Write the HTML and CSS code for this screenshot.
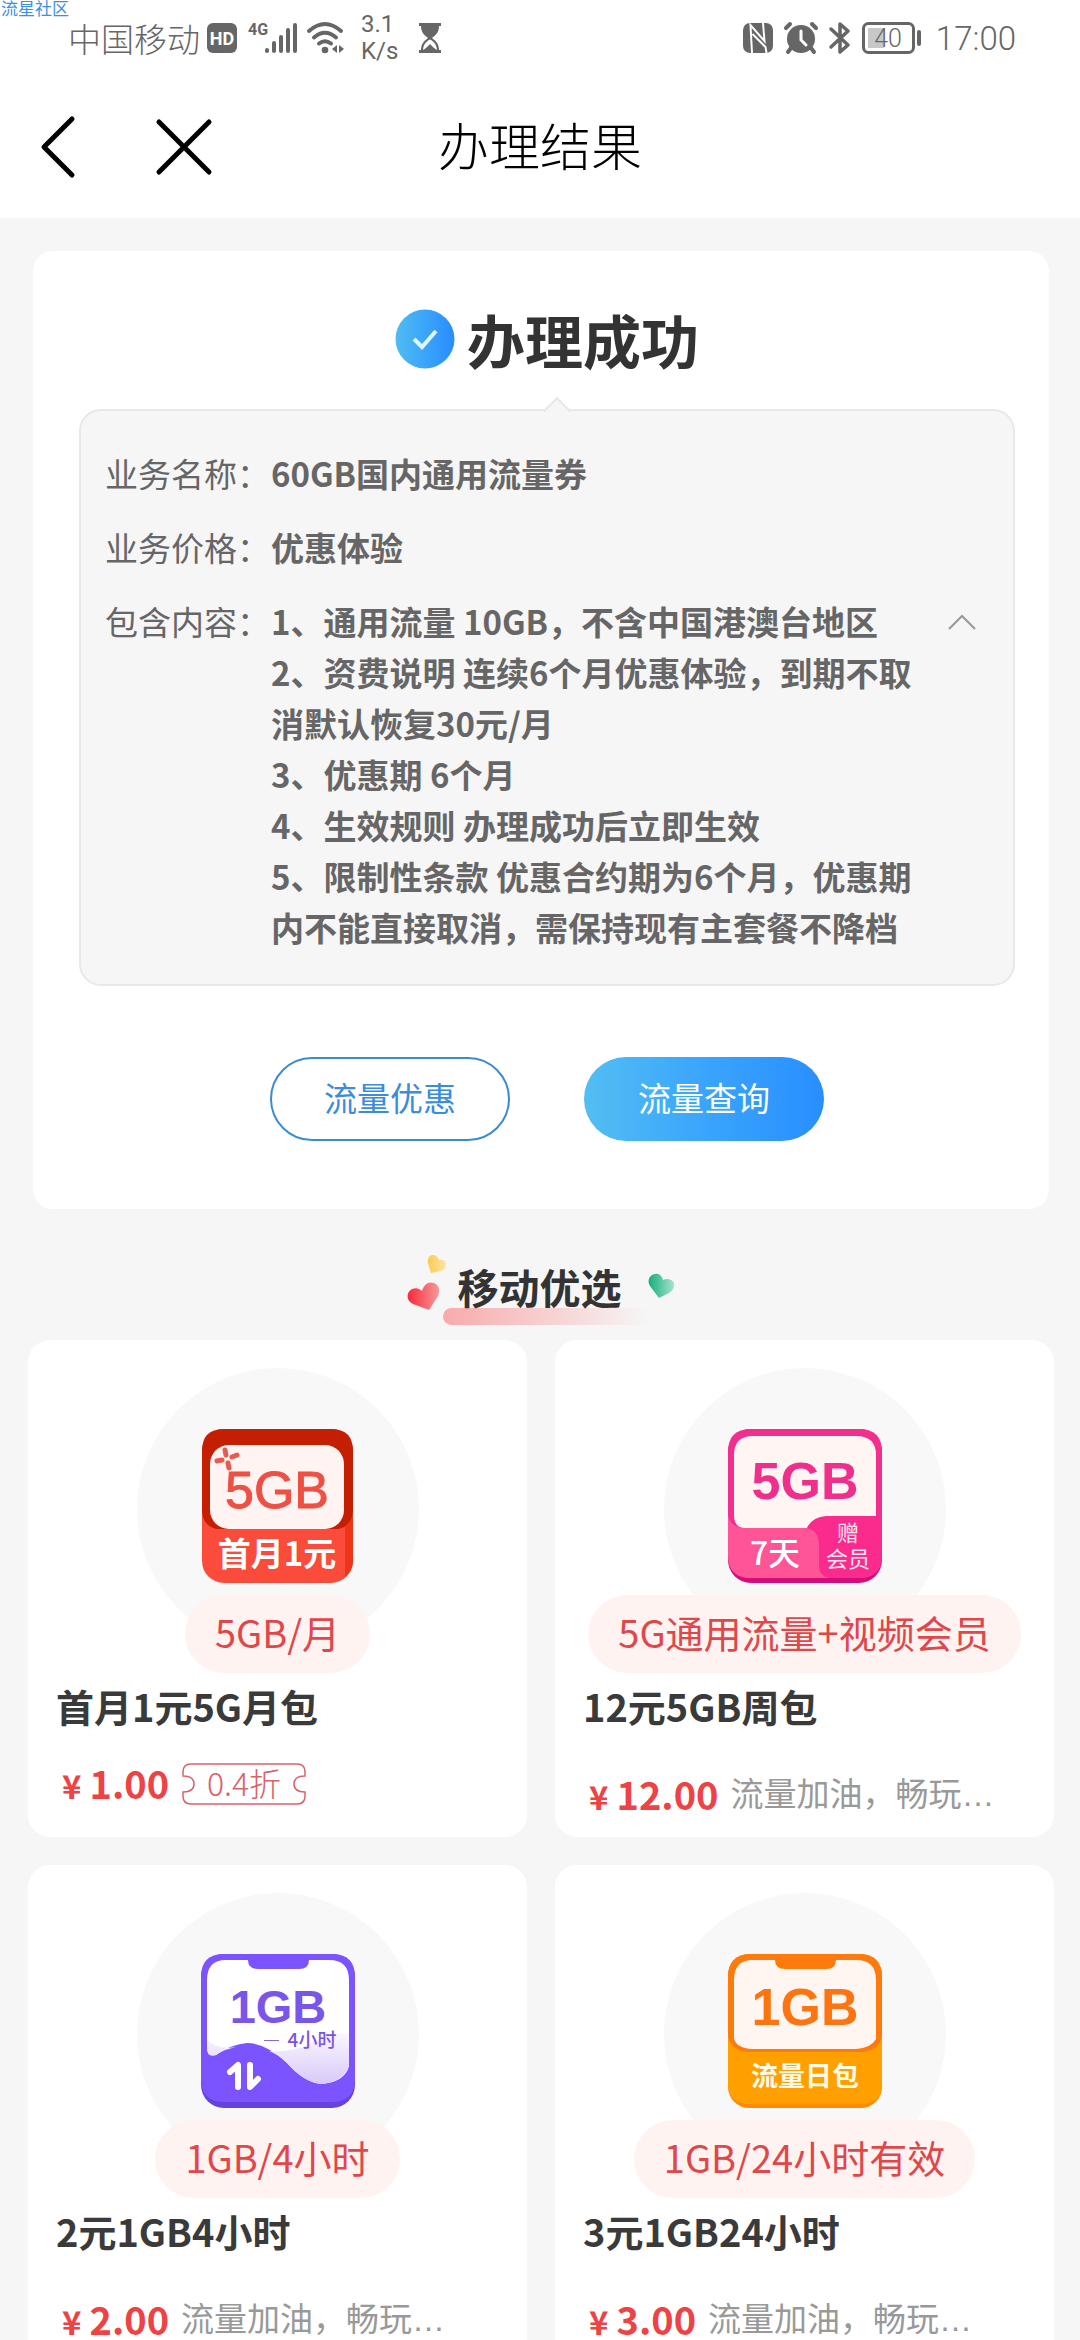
FILE: index.html
```html
<!DOCTYPE html>
<html lang="zh-CN">
<head>
<meta charset="utf-8">
<meta name="viewport" content="width=device-width, initial-scale=1">
<title>办理结果</title>
<link rel="stylesheet" href="styles.css">
</head>
<body>
<div class="screen">
  <span class="watermark">流星社区</span>
  <div class="status">
    <span class="carrier">中国移动</span>
    <svg class="hd" width="30" height="30" viewBox="0 0 30 30"><rect width="30" height="30" rx="6" fill="#666"/><text x="15" y="22" text-anchor="middle" class="hd-text">HD</text></svg>
    <svg class="signal" width="50" height="32" viewBox="0 0 50 32"><text x="0" y="13" class="net-text">4G</text><g stroke="#666" stroke-width="4" stroke-linecap="round"><path d="M19 28v1M26 21v8M33 15v14M40 8v21M47 3v26"/></g></svg>
    <svg class="wifi" width="38" height="32" viewBox="0 0 38 32" fill="none" stroke="#666" stroke-width="4" stroke-linecap="round"><path d="M2 9Q18 -5 34 9M7 15.500Q18 6 29 15.500M12 21.500Q18 17 24 21.500"/><circle cx="18" cy="28" r="3.300" fill="#666" stroke="none"/><path d="M30 23v8l-5-4zM32 31v-8l5 4z" fill="#666" stroke="none"/></svg>
    <span class="speed">3.1<br>K/s</span>
    <svg width="24" height="32" viewBox="0 0 24 32"><path d="M1 1h22v3h-2c0 6-3 9-7 12 4 3 7 6 7 12h2v3H1v-3h2c0-6 3-9 7-12-4-3-7-6-7-12H1z" fill="#666"/><path d="M12 17.500c-4 2-6.500 5-7 10.500 2-1 5-4 7-6 2 2 5 5 7 6-.5-5.500-3-8.500-7-10.500z" fill="#fff"/></svg>
    <span class="grow"></span>
    <svg width="30" height="32" viewBox="0 0 30 32"><rect y="1" width="30" height="30" rx="7" fill="#666"/><path d="M9 31L7.500 3l14 16L20 1M9.500 12l13 13 1 6" fill="none" stroke="#fff" stroke-width="2"/></svg>
    <svg width="34" height="32" viewBox="0 0 34 32"><circle cx="17" cy="17" r="14" fill="#666"/><path d="M2 6l4-4M32 6l-4-4M7 26l-3 4M27 26l3 4" stroke="#666" stroke-width="4" stroke-linecap="round"/><path d="M17 9v9l5 5" fill="none" stroke="#fff" stroke-width="3" stroke-linecap="round"/></svg>
    <svg width="22" height="34" viewBox="0 0 22 34"><path d="M2 8l17 16-8 7V3l8 7L2 26" fill="none" stroke="#666" stroke-width="3.500" stroke-linejoin="round" stroke-linecap="round"/></svg>
    <svg class="battery" width="60" height="34" viewBox="0 0 60 34"><rect x="1.500" y="2.500" width="50" height="29" rx="5" fill="none" stroke="#666" stroke-width="3"/><rect x="6" y="7" width="16" height="20" fill="#c8c8c8"/><text x="26" y="26" text-anchor="middle" class="battery-text">40</text><rect x="55" y="9" width="4" height="16" rx="2" fill="#666"/></svg>
    <span class="clock">17:00</span>
  </div>

  <header class="nav">
    <div class="nav-actions">
      <button class="icon-button" aria-label="返回"><svg width="36" height="62" viewBox="0 0 36 62"><path d="M32 3L4 31l28 28" fill="none" stroke="#000" stroke-width="5" stroke-linecap="round" stroke-linejoin="round"/></svg></button>
      <button class="icon-button" aria-label="关闭"><svg width="56" height="56" viewBox="0 0 56 56"><path d="M3 3l50 50M53 3L3 53" stroke="#000" stroke-width="5" stroke-linecap="round"/></svg></button>
    </div>
    <h1 class="nav-title">办理结果</h1>
  </header>

  <main class="content">
    <section class="result">
      <h2 class="result-title">
        <svg width="60" height="60" viewBox="0 0 60 60"><defs><linearGradient id="tick" x1="0" x2="1"><stop offset="0" stop-color="#4fbcf3"/><stop offset="1" stop-color="#278dff"/></linearGradient></defs><circle cx="30" cy="30" r="29.500" fill="url(#tick)"/><path d="M19 30l8 8 14-16" fill="none" stroke="#dff5ff" stroke-width="4"/></svg>
        办理成功
      </h2>
      <dl class="detail">
        <div class="row"><dt>业务名称：</dt><dd>60GB国内通用流量券</dd></div>
        <div class="row"><dt>业务价格：</dt><dd>优惠体验</dd></div>
        <div class="row"><dt>包含内容：</dt>
          <dd>
            <p>1、通用流量 10GB，不含中国港澳台地区</p>
            <p>2、资费说明 连续6个月优惠体验，到期不取消默认恢复30元/月</p>
            <p>3、优惠期 6个月</p>
            <p>4、生效规则 办理成功后立即生效</p>
            <p>5、限制性条款 优惠合约期为6个月，优惠期内不能直接取消，需保持现有主套餐不降档</p>
          </dd>
          <dd class="toggle"><button class="icon-button" aria-label="收起"><svg width="28" height="16" viewBox="0 0 28 16"><path d="M1 15L14 2l13 13" fill="none" stroke="#999" stroke-width="2"/></svg></button></dd>
        </div>
      </dl>
      <div class="actions">
        <button class="pill outline">流量优惠</button>
        <button class="pill filled">流量查询</button>
      </div>
    </section>

    <div class="picks-head">
      <svg width="42" height="64" viewBox="0 0 42 64"><defs><linearGradient id="red" x1="0" x2="1"><stop offset="0" stop-color="#f9283c"/><stop offset="1" stop-color="#f79a9a"/></linearGradient><linearGradient id="gold" x1="0" x2="1"><stop offset="0" stop-color="#fbcb50"/><stop offset="1" stop-color="#fbe5a8"/></linearGradient></defs><path d="M22 56L6 50C-1 47-1 38 5 35c5-2 8 0 10 2 2-7 7-10 12-8 6 2 6 9 4 13z" fill="url(#red)"/><path d="M24 19L21 9c-1-4 1-8 5-8 3 0 5 2 6 5 3-1 7 0 7 4s-2 6-5 7z" fill="url(#gold)"/></svg>
      <h2 class="picks-title">移动优选</h2>
      <svg width="28" height="26" viewBox="0 0 28 26"><defs><linearGradient id="green" x1="0" x2="1"><stop offset="0" stop-color="#16ae7c"/><stop offset="1" stop-color="#a8e3cf"/></linearGradient></defs><path d="M11 25L2 13C-1 8 1 2 7 1c4-1 7 2 8 6 4-2 9-1 11 3 1 5-2 8-5 10z" fill="url(#green)"/></svg>
    </div>

    <section class="picks">
      <article class="card">
        <div class="art">
          <svg width="154" height="154" viewBox="0 0 154 154"><rect x="1" width="151" height="154" rx="22" fill="#fb4c3b"/><path d="M1 22Q1 0 23 0h107q22 0 22 22v60q0 14-14 18H15Q1 96 1 82z" fill="#c41f02"/><path d="M1 84q2 16 22 20h107q20-4 22-20v40H1z" fill="#fb4c3b"/><path d="M144 98q7-6 8-14v48q0 9-8 16z" fill="#ee3518"/><rect x="9" y="16" width="134" height="84" rx="19" fill="#fff4f2"/><g stroke="#ea5a50" stroke-width="5" stroke-linecap="round"><path d="M24 21l1 5M16 32l5-1M31 28l5-2M27 34l1 5"/></g><text x="76" y="79" text-anchor="middle" class="art-big art-red">5GB</text><text x="76" y="137" text-anchor="middle" class="art-label">首月1元</text></svg>
        </div>
        <span class="tag">5GB/月</span>
        <h3 class="name">首月1元5G月包</h3>
        <div class="price-row compact"><span class="price"><span class="yen">¥</span>1.00</span>
          <span class="coupon"><svg width="126" height="42" viewBox="0 0 126 42"><path d="M10 1h106q8 0 8 8v4q-11 0-11 8t11 8v4q0 8-8 8H10q-8 0-8-8v-4q11 0 11-8T2 13V9q0-8 8-8z" fill="none" stroke="#d9626a" stroke-width="1.500"/><text x="63" y="33" text-anchor="middle" class="coupon-text">0.4折</text></svg></span>
        </div>
      </article>

      <article class="card">
        <div class="art">
          <svg width="154" height="154" viewBox="0 0 154 154"><rect width="154" height="154" rx="23" fill="#d50d7b"/><path d="M0 23Q0 0 23 0h108q23 0 23 23v103q0 23-23 23H23Q0 149 0 126z" fill="#f22f8d"/><path d="M6 26Q6 7 25 7h103q20 0 20 19v61H98q-14 1-19 12H17Q6 99 6 86z" fill="#fff5f3"/><path d="M0 86q3 13 16 13h60q15 0 15 18v20q0 10 10 12H23Q0 149 0 126z" fill="#ff5596"/><path d="M98 88h56v38q0 23-23 23h-26q-13-2-13-14v-18q0-15-13-18 5-10 19-11z" fill="#fb2b8d"/><text x="77" y="70" text-anchor="middle" class="art-big art-bold art-pink">5GB</text><text x="47" y="136" text-anchor="middle" class="art-seven">7天</text><text x="120" y="112" text-anchor="middle" class="art-small">赠</text><text x="120" y="138" text-anchor="middle" class="art-small">会员</text></svg>
        </div>
        <span class="tag">5G通用流量+视频会员</span>
        <h3 class="name">12元5GB周包</h3>
        <div class="price-row"><span class="price"><span class="yen">¥</span>12.00</span><span class="desc">流量加油，畅玩…</span></div>
      </article>

      <article class="card">
        <div class="art">
          <svg width="154" height="154" viewBox="0 0 154 154"><defs><linearGradient id="lilac" x1="0" x2="0" y1="0" y2="1"><stop offset="0" stop-color="#fbf7ff"/><stop offset="1" stop-color="#d9c9f8"/></linearGradient></defs><rect width="154" height="154" rx="23" fill="#6541dd"/><path d="M0 23Q0 0 23 0h108q23 0 23 23v102q0 23-23 23H23Q0 148 0 125z" fill="#7b53ff"/><path d="M6 26Q6 6 25 6h22q0 9 10 9h41q10 0 10-9h20q20 0 20 20v86q-4 16-28 18-17-2-34-21-21-20-40-20-15 1-31 12-9 2-9-7z" fill="#fff"/><path d="M68 97q23 2 42-8 20-11 38-10v33q-6 16-28 18-18-2-34-21-9-9-18-12zM6 86q12 10 29 7-14 3-20 8-9 3-9-7z" fill="url(#lilac)"/><text x="77" y="69" text-anchor="middle" class="art-mid art-purple">1GB</text><path d="M63 86.500h15" stroke="#8a68cf"/><text x="111" y="93" text-anchor="middle" class="art-hours art-purple">4小时</text><path d="M29 118l8-7v22M49 111v22l8-8" fill="none" stroke="#fff" stroke-width="6" stroke-linecap="round" stroke-linejoin="round"/></svg>
        </div>
        <span class="tag">1GB/4小时</span>
        <h3 class="name">2元1GB4小时</h3>
        <div class="price-row"><span class="price"><span class="yen">¥</span>2.00</span><span class="desc">流量加油，畅玩…</span></div>
      </article>

      <article class="card">
        <div class="art">
          <svg width="154" height="154" viewBox="0 0 154 154"><rect width="154" height="154" rx="21" fill="#ff8a00"/><path d="M0 80h154v50q0 20-22 20H22Q0 150 0 130z" fill="#ffa000"/><path d="M0 23Q0 0 23 0h108q23 0 23 23v57q-1 16-20 18H20Q1 96 0 80z" fill="#fd7a0c"/><path d="M6 26Q6 6 25 6h22q0 9 10 9h41q10 0 10-9h20q20 0 20 20v59q-5 9-20 10H24Q9 94 6 85z" fill="#fff6f2"/><text x="77" y="71" text-anchor="middle" class="art-big art-bold art-orange">1GB</text><text x="77" y="132" text-anchor="middle" class="art-day">流量日包</text></svg>
        </div>
        <span class="tag">1GB/24小时有效</span>
        <h3 class="name">3元1GB24小时</h3>
        <div class="price-row"><span class="price"><span class="yen">¥</span>3.00</span><span class="desc">流量加油，畅玩…</span></div>
      </article>
    </section>
  </main>
</div>
</body>
</html>
```
FILE: styles.css
```css
* { box-sizing: border-box; margin: 0; padding: 0; }
body { background: #f6f6f6; color: #333; font-family: "Noto Sans CJK SC", sans-serif; }
svg { display: block; flex: none; overflow: visible; }
button { font: inherit; cursor: pointer; }

.screen { position: relative; display: flex; flex-direction: column; height: 100vh; overflow: hidden; }
.watermark { position: absolute; top: 0; left: 1px; color: #3a90e4; font-size: 17px; line-height: 16px; }

/* Status bar */
.status { display: flex; flex: none; align-items: center; height: 76px; padding: 0 64px 0 68px; gap: 11px; background: #fff; color: #666; }
.carrier { font-size: 33px; font-weight: 300; line-height: 48px; }
.hd { margin-left: -4px; }
.signal { margin-right: -2px; }
.wifi { margin-right: 5px; }
.speed { margin-right: 9px; font-family: Roboto, sans-serif; font-size: 24px; line-height: 27px; }
.grow { flex: 1; }
.clock { margin-left: 3px; font-family: Roboto, sans-serif; font-size: 33px; font-weight: 300; }
.hd-text { fill: #fff; font: bold 18px Roboto, sans-serif; }
.net-text { fill: #666; font: bold 16px Roboto, sans-serif; }
.battery-text { fill: #666; font: 300 25px Roboto, sans-serif; }

/* Navigation bar */
.nav { display: grid; flex: none; grid-template-columns: 1fr auto 1fr; align-items: center; height: 142px; padding: 0 40px; background: #fff; color: #000; }
.nav-actions { display: flex; align-items: center; gap: 80px; }
.icon-button { border: 0; background: none; }
.nav-title { padding-bottom: 6px; font-size: 51px; font-weight: 300; line-height: 74px; }

.content { flex: 1; min-height: 0; overflow-y: auto; scrollbar-width: none; padding: 33px 26px 28px 28px; }

/* Result card */
.result { margin: 0 5px; padding: 47px 34px 68px 46px; border-radius: 20px; background: #fff; }
.result-title { display: flex; justify-content: center; align-items: center; gap: 12px; margin-bottom: 29px; font-size: 58px; font-weight: 700; line-height: 82px; }
.detail { position: relative; display: flex; flex-direction: column; gap: 23px; padding: 37px 37px 31px 24px; border: 2px solid #e8e8e8; border-radius: 22px; background: #f6f6f6; color: #666; font-size: 33px; line-height: 51px; }
.detail::before { content: ""; position: absolute; top: -10px; left: 50%; width: 18px; height: 18px; border: 2px solid #e8e8e8; border-right: 0; border-bottom: 0; background: #f6f6f6; transform: rotate(45deg); }
.row { display: flex; }
.row dt { flex: none; width: 166px; }
.row dd { flex: 1; font-weight: 700; }
.row .toggle { flex: none; margin-left: 26px; }
.toggle .icon-button { display: flex; align-items: center; height: 51px; }
.actions { display: flex; justify-content: center; gap: 74px; margin-top: 71px; }
.pill { width: 240px; height: 84px; padding-bottom: 4px; border: 2px solid transparent; border-radius: 42px; font-size: 33px; line-height: 48px; }
.outline { border-color: #3a8cd2; background: #fff; color: #3a8cdc; }
.filled { border: 0; background: linear-gradient(90deg, #52bef2, #3aa5fc 50%, #288eff); color: #fff; }

/* Section heading */
.picks-head { display: flex; justify-content: center; align-items: center; padding: 45px 0 22px; }
.picks-title { position: relative; z-index: 0; margin: 0 26px 0 9px; font-size: 41px; font-weight: 700; line-height: 56px; }
.picks-title::before { content: ""; position: absolute; z-index: -1; bottom: -11px; left: -15px; width: 206px; height: 17px; border-radius: 9px; background: linear-gradient(90deg, #f8aaaa, #f6f6f600); }

/* Product cards */
.picks { display: grid; grid-template-columns: 1fr 1fr; gap: 28px; }
.card { display: flex; flex-direction: column; padding: 28px 28px 11px; border-radius: 22px; background: #fff; }
.art { display: flex; align-self: center; justify-content: center; width: 282px; height: 282px; padding-top: 61px; border-radius: 50%; background: #f8f8f8; }
.tag { align-self: center; margin-top: -55px; padding: 0 30px 4px; border-radius: 39px; background: #fff3f1; color: #e0474a; font-size: 38px; line-height: 74px; white-space: nowrap; }
.name { margin-top: 5px; color: #3a3a3a; font-size: 38px; font-weight: 700; line-height: 56px; }
.price-row { display: flex; align-items: center; height: 62px; margin-top: 30px; gap: 12px; white-space: nowrap; }
.price-row.compact { height: 40px; }
.price { color: #ee4245; font-size: 38px; font-weight: 700; line-height: 40px; }
.yen { padding: 0 8px 0 6px; font-size: 33px; }
.desc { color: #999; font-family: "Liberation Sans", "Noto Sans CJK SC", sans-serif; font-size: 33px; line-height: 48px; }
.coupon-text { fill: #d9626a; font-size: 32px; font-weight: 300; }

.art-big { font: 52px "Liberation Sans", sans-serif; }
.art-mid { font: bold 47px "Liberation Sans", sans-serif; }
.art-bold { font-weight: 700; }
.art-red { fill: #ee5044; stroke: #ee5044; stroke-width: 1px; }
.art-pink { fill: #f02f8c; }
.art-purple { fill: #7a55ea; }
.art-orange { fill: #fd7410; }
.art-label { fill: #fff; font-size: 33px; font-weight: 700; }
.art-seven { fill: #fff; font-size: 32px; font-weight: 500; }
.art-small { fill: #ffe4f1; font-size: 22px; }
.art-hours { font-size: 19px; font-weight: 500; }
.art-day { fill: #fffbe6; font-size: 27px; font-weight: 700; }
```
